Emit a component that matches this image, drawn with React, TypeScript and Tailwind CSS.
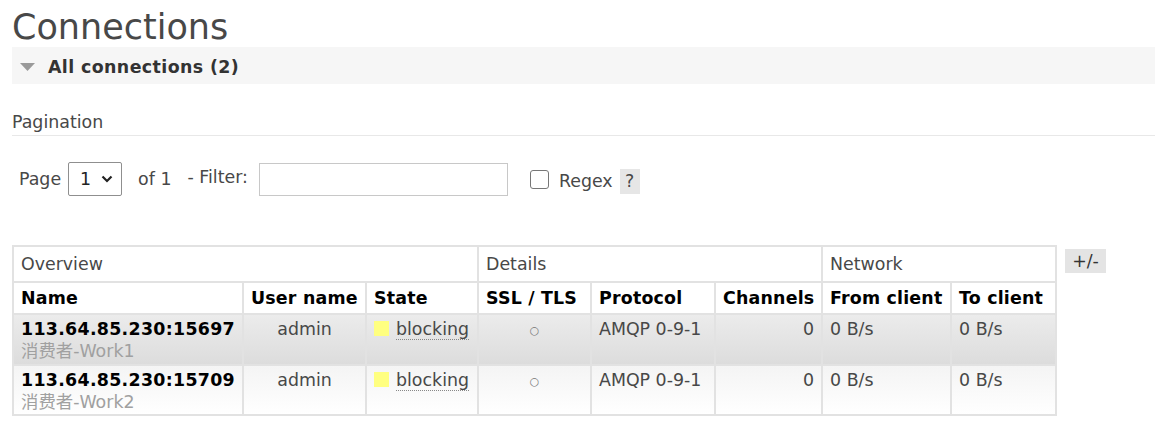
import React from "react";

const font = { fontFamily: '"DejaVu Sans", Verdana, sans-serif' };

const rows = [
  { name: "113.64.85.230:15697", label: "消费者-Work1", alt: 1 },
  { name: "113.64.85.230:15709", label: "消费者-Work2", alt: 2 },
];

export default function App() {
  return (
    <div
      className="w-[1155px] h-[426px] bg-white text-[17.4px] text-[#484848] overflow-hidden"
      style={{ fontFamily: '"DejaVu Sans", Verdana, "Noto Sans CJK SC", sans-serif' }}
    >
      <h1 className="pl-[12px] pt-[7px] text-[35px] leading-[40px] text-[#484848]">Connections</h1>
      <div className="ml-[12px] h-[37px] bg-[#f6f6f6] flex items-center">
        <svg width="15" height="8" viewBox="0 0 15 8" className="ml-[8px] mt-[3px]">
          <polygon points="0,0 15,0 7.5,8" fill="#9a9a9a" />
        </svg>
        <span className="ml-[13px] mt-[3px] font-bold text-[#333] tracking-[0.4px]">All connections (2)</span>
      </div>
      <div className="ml-[12px] mt-[28px] border-b border-[#e8e8e8] pb-[3px] leading-[20px]">Pagination</div>
      <div className="ml-[19px] mt-[26px] flex items-center h-[34px]">
        <span>Page</span>
        <div className="ml-[7px] w-[54px] h-[34px] border border-[#8f8f8f] rounded-[2px] flex items-center pl-[11px] text-[#222]">
          <span>1</span>
          <svg width="12" height="8" viewBox="0 0 12 8" className="ml-[10px]">
            <path d="M1.5 1.5 L6 6 L10.5 1.5" stroke="#222" strokeWidth="2.2" fill="none" />
          </svg>
        </div>
        <span className="ml-[16px]">of 1</span>
        <span className="ml-[16px] -mt-[4px]">- Filter:</span>
        <div className="ml-[11px] w-[249px] h-[33px] border border-[#c8c8c8]" />
        <div className="ml-[22px] w-[19px] h-[19px] border border-[#777] rounded-[3px]" />
        <span className="ml-[10px] mt-[4px]">Regex</span>
        <span className="ml-[7px] mt-[4px] w-[20px] h-[25px] bg-[#e6e6e6] flex items-center justify-center">?</span>
      </div>
      <div className="ml-[12px] mt-[49px] flex items-start">
        <table className="border-collapse w-[1043px] table-fixed" style={font}>
          <colgroup>
            <col className="w-[230px]" />
            <col className="w-[123px]" />
            <col className="w-[112px]" />
            <col className="w-[113px]" />
            <col className="w-[124px]" />
            <col className="w-[107px]" />
            <col className="w-[129px]" />
            <col className="w-[105px]" />
          </colgroup>
          <thead>
            <tr className="h-[36px]">
              <th colSpan={3} className="border-2 border-[#e2e2e2] text-left font-normal px-[7px] text-[#484848]">Overview</th>
              <th colSpan={3} className="border-2 border-[#e2e2e2] text-left font-normal px-[7px] text-[#484848]">Details</th>
              <th colSpan={2} className="border-2 border-[#e2e2e2] text-left font-normal px-[7px] text-[#484848]">Network</th>
            </tr>
            <tr className="h-[32px] text-black tracking-[0.2px]">
              <th className="border-2 border-[#e2e2e2] text-left px-[7px] whitespace-nowrap">Name</th>
              <th className="border-2 border-[#e2e2e2] text-left px-[7px] whitespace-nowrap">User name</th>
              <th className="border-2 border-[#e2e2e2] text-left px-[7px] whitespace-nowrap">State</th>
              <th className="border-2 border-[#e2e2e2] text-left px-[7px] whitespace-nowrap">SSL / TLS</th>
              <th className="border-2 border-[#e2e2e2] text-left px-[7px] whitespace-nowrap">Protocol</th>
              <th className="border-2 border-[#e2e2e2] text-left px-[7px] whitespace-nowrap">Channels</th>
              <th className="border-2 border-[#e2e2e2] text-left px-[7px] whitespace-nowrap">From client</th>
              <th className="border-2 border-[#e2e2e2] text-left px-[7px] whitespace-nowrap">To client</th>
            </tr>
          </thead>
          <tbody>
            {rows.map((r) => (
              <tr
                key={r.name}
                className={
                  r.alt === 1
                    ? "h-[51px] bg-gradient-to-b from-[#ececec] to-[#dcdcdc]"
                    : "h-[50px] bg-gradient-to-b from-[#f4f4f4] to-[#ffffff]"
                }
              >
                <td className="border-2 border-[#e2e2e2] px-[7px] align-top pt-[3px] leading-[22px] whitespace-nowrap">
                  <div className="font-bold text-black tracking-[0.3px]">{r.name}</div>
                  <div className="text-[#a0a0a0]" style={{ fontFamily: '"DejaVu Sans", "Noto Sans CJK SC", sans-serif' }}>{r.label}</div>
                </td>
                <td className="border-2 border-[#e2e2e2] px-[7px] align-top pt-[3px] leading-[22px] text-center">admin</td>
                <td className="border-2 border-[#e2e2e2] px-[7px] align-top pt-[3px] leading-[22px] whitespace-nowrap">
                  <span className="inline-block w-[15px] h-[15px] bg-[#ffff80] align-middle mr-[7px] -mt-[3px]" />
                  <span className="border-b border-dotted border-[#888] leading-[20px]">blocking</span>
                </td>
                <td className="border-2 border-[#e2e2e2] px-[7px] align-top pt-[3px] leading-[22px] text-center text-[11px] text-[#777]">
                  <span className="inline-block mt-[2px]">○</span>
                </td>
                <td className="border-2 border-[#e2e2e2] px-[7px] align-top pt-[3px] leading-[22px] whitespace-nowrap">AMQP 0-9-1</td>
                <td className="border-2 border-[#e2e2e2] px-[7px] align-top pt-[3px] leading-[22px] text-right">0</td>
                <td className="border-2 border-[#e2e2e2] px-[7px] align-top pt-[3px] leading-[22px]">0 B/s</td>
                <td className="border-2 border-[#e2e2e2] px-[7px] align-top pt-[3px] leading-[22px]">0 B/s</td>
              </tr>
            ))}
          </tbody>
        </table>
        <div className="ml-[8px] mt-[4px] w-[41px] h-[24px] bg-[#e4e4e4] flex items-center justify-center text-[#333]">+/-</div>
      </div>
    </div>
  );
}
